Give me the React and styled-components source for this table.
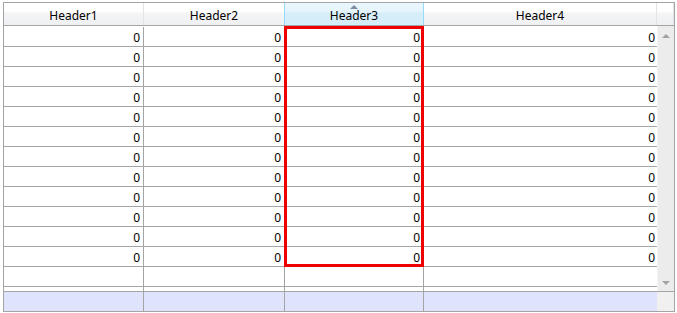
import React from 'react'
import styled, { createGlobalStyle } from 'styled-components'

const GlobalStyle = createGlobalStyle`
  html, body { margin: 0; padding: 0; background: #fff; }
  body { font-family: "Noto Sans", "Open Sans", sans-serif; font-size: 12px; color: #000; }
`

const LINE = '#a5a5a5'
const DATA_COLS = '140px 141px 139px 233px'

const Grid = styled.div`
  margin: 2px 0 0 3px;
  width: 672px;
  height: 310px;
  box-sizing: border-box;
  border: 1px solid ${LINE};
  display: flex;
  flex-direction: column;
  background: #fff;
`

const HeaderRow = styled.div`
  display: grid;
  grid-template-columns: ${DATA_COLS} 1fr;
  height: 23px;
  flex: none;
  box-sizing: border-box;
  border-bottom: 1px solid ${LINE};
`

const HeaderCell = styled.div`
  position: relative;
  display: flex;
  align-items: center;
  justify-content: center;
  box-sizing: border-box;
  padding-top: 3px;
  border-right: 1px solid ${p => (p.$sorted ? '#96d9f9' : '#e2e3e5')};
  border-left: ${p => (p.$sorted ? '1px solid #96d9f9' : 'none')};
  margin-left: ${p => (p.$sorted ? '-1px' : '0')};
  background: ${p =>
    p.$sorted
      ? 'linear-gradient(#eaf6fd 0%, #e5f4fc 40%, #d7eef9 45%, #d4edfa 100%)'
      : 'linear-gradient(#ffffff 0%, #ffffff 40%, #f4f5f7 45%, #eff0f3 100%)'};
`

const SortArrow = styled.span`
  position: absolute;
  top: 2px;
  left: 50%;
  margin-left: -4px;
  width: 0;
  height: 0;
  border-left: 4px solid transparent;
  border-right: 4px solid transparent;
  border-bottom: 4px solid #7a8da2;
`

const Body = styled.div`
  display: grid;
  grid-template-columns: 1fr 17px;
  height: 265px;
  flex: none;
`

const Rows = styled.div`
  position: relative;
  display: flex;
  flex-direction: column;
  padding-top: 1px;
`

const Row = styled.div`
  display: grid;
  grid-template-columns: ${DATA_COLS};
  height: 20px;
  flex: none;
  box-sizing: border-box;
  border-bottom: 1px solid ${LINE};
`

const Cell = styled.div`
  box-sizing: border-box;
  border-right: 1px solid ${LINE};
  display: flex;
  align-items: center;
  justify-content: flex-end;
  padding: 1px 3px 0 0;
  &:last-child { border-right: none; padding-right: 2px; }
`

/* the thin strip between the new-item row and the summary row */
const Gap = styled.div`
  flex: 1;
  display: grid;
  grid-template-columns: ${DATA_COLS};
  & > div { border-right: 1px solid ${LINE}; }
  & > div:last-child { border-right: none; }
`

const SummaryRow = styled.div`
  display: grid;
  grid-template-columns: ${DATA_COLS} 1fr;
  flex: 1;
  border-top: 1px solid ${LINE};
  background: #dfe3fc;
  & > div { border-right: 1px solid ${LINE}; }
  & > div:nth-child(4) { border-right: none; }
  & > div:last-child { background: #f0f0f0; border-right: none; }
`

const Selection = styled.div`
  position: absolute;
  left: 280px;
  top: 0;
  width: 140px;
  height: 241px;
  box-sizing: border-box;
  border: 3px solid #ee0000;
  pointer-events: none;
`

const ScrollBar = styled.div`
  background: #ececec;
  border-left: 1px solid #f4f4f4;
  display: flex;
  flex-direction: column;
  justify-content: space-between;
  align-items: center;
  padding: 8px 0 6px;
`

const Arrow = styled.span`
  width: 0;
  height: 0;
  border-left: 4px solid transparent;
  border-right: 4px solid transparent;
  ${p =>
    p.$down
      ? 'border-top: 4px solid #a2a2a2;'
      : 'border-bottom: 4px solid #a2a2a2;'}
`

const headers = ['Header1', 'Header2', 'Header3', 'Header4']
const data = Array.from({ length: 12 }, () => [0, 0, 0, 0])

export default function App() {
  return (
    <>
      <GlobalStyle />
      <Grid>
        <HeaderRow>
          {headers.map((h, i) => (
            <HeaderCell key={h} $sorted={i === 2}>
              {i === 2 && <SortArrow />}
              {h}
            </HeaderCell>
          ))}
          <HeaderCell />
        </HeaderRow>
        <Body>
          <Rows>
            {data.map((r, ri) => (
              <Row key={ri}>
                {r.map((v, ci) => (
                  <Cell key={ci}>{v}</Cell>
                ))}
              </Row>
            ))}
            <Row>
              <Cell />
              <Cell />
              <Cell />
              <Cell />
            </Row>
            <Gap>
              <div />
              <div />
              <div />
              <div />
            </Gap>
            <Selection />
          </Rows>
          <ScrollBar>
            <Arrow />
            <Arrow $down />
          </ScrollBar>
        </Body>
        <SummaryRow>
          <div />
          <div />
          <div />
          <div />
          <div />
        </SummaryRow>
      </Grid>
    </>
  )
}
